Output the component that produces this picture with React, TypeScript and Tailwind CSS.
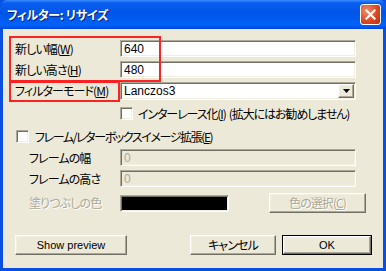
const sunken =
  'border border-t-[#aca899] border-l-[#aca899] border-r-white border-b-white shadow-[inset_1px_1px_#716f64,inset_-1px_-1px_#f1efe2]';
const raised =
  'border border-t-white border-l-white border-r-[#716f64] border-b-[#716f64] shadow-[inset_-1px_-1px_#aca899,inset_1px_1px_#f1efe2]';

const jp = "font-['MS_UI_Gothic','Noto_Sans_CJK_JP',sans-serif] [font-feature-settings:'palt'] tracking-[-0.9px]";
const latin = "font-['Liberation_Sans','Noto_Sans_CJK_JP',sans-serif] tracking-normal";

function CheckBox() {
  return <div className={`w-[13px] h-[13px] bg-white shrink-0 ${sunken}`} />;
}

function TextField({ value, disabled }: { value: string; disabled?: boolean }) {
  return (
    <div
      className={`w-[236px] h-[17px] flex items-center pl-[3px] text-[12px] leading-none ${latin} ${sunken} ${
        disabled ? 'bg-[#ece9d8] text-[#aca899]' : 'bg-white text-black'
      }`}
    >
      {value}
    </div>
  );
}

export default function App() {
  return (
    <div className={`w-[386px] h-[271px] flex flex-col bg-[#0a4fe0] ${jp} text-[12px] text-black relative`}>
      {/* title bar */}
      <div className="h-[29px] shrink-0 flex items-center pl-[7px] pr-[5px] rounded-t-[7px] bg-[linear-gradient(to_bottom,#3a8cff_0%,#0a5eef_10%,#0054e8_45%,#0062f8_85%,#0057ee_93%,#0041d4_100%)]">
        <span className="flex-1 text-white font-bold text-[12px] pt-[1px] tracking-[-0.3px] [text-shadow:1px_1px_#0a1f7d]">
          フィルター: リサイズ
        </span>
        <div className="w-[21px] h-[21px] rounded-[3px] border border-white bg-[radial-gradient(circle_at_30%_30%,#f08a6a,#d9441f_60%,#b8321a)] flex items-center justify-center">
          <svg width="11" height="11" viewBox="0 0 11 11">
            <path d="M1.5 1.5 L9.5 9.5 M9.5 1.5 L1.5 9.5" stroke="white" strokeWidth="2.2" strokeLinecap="square" />
          </svg>
        </div>
      </div>

      {/* client */}
      <div className="flex-1 flex flex-col bg-[#ece9d8] mx-[3px] mb-[3px] pt-[11px]">
        <div className="flex items-center h-[17px]">
          <div className="w-[117px] pl-[12px]">
            新しい幅(<u>W</u>)
          </div>
          <TextField value="640" />
        </div>
        <div className="flex items-center h-[17px] mt-[4px]">
          <div className="w-[117px] pl-[12px]">
            新しい高さ(<u>H</u>)
          </div>
          <TextField value="480" />
        </div>
        <div className="flex items-center h-[18px] mt-[4px]">
          <div className="w-[117px] pl-[12px]">
            フィルターモード(<u>M</u>)
          </div>
          <div className={`w-[236px] h-[18px] bg-white flex items-center pl-[3px] pr-[1px] ${sunken}`}>
            <span className={`flex-1 text-[12px] leading-none ${latin}`}>Lanczos3</span>
            <div className={`w-[16px] h-[14px] bg-[#ece9d8] flex items-center justify-center ${raised}`}>
              <svg width="7" height="4" viewBox="0 0 7 4">
                <path d="M0 0 H7 L3.5 4 Z" fill="black" />
              </svg>
            </div>
          </div>
        </div>

        <div className="flex items-center h-[13px] mt-[7px] pl-[117px] gap-[5px]">
          <CheckBox />
          <span className="whitespace-nowrap tracking-[-1.1px]">
            インターレース化(<u>I</u>)&nbsp; (拡大にはお勧めしません)
          </span>
        </div>

        <div className="flex items-center h-[13px] mt-[10px] pl-[13px] gap-[6px]">
          <CheckBox />
          <span className="whitespace-nowrap tracking-[-1.4px]">
            フレーム/レターボックスイメージ拡張(<u>E</u>)
          </span>
        </div>

        <div className="flex items-center h-[17px] mt-[6px]">
          <div className="w-[117px] pl-[26px]">フレームの幅</div>
          <TextField value="0" disabled />
        </div>
        <div className="flex items-center h-[17px] mt-[4px]">
          <div className="w-[117px] pl-[26px]">フレームの高さ</div>
          <TextField value="0" disabled />
        </div>

        <div className="flex items-center h-[20px] mt-[6px]">
          <div className="w-[117px] pl-[26px] text-[#aca899] [text-shadow:1px_1px_#fff]">塗りつぶしの色</div>
          <div className={`w-[109px] h-[17px] bg-black ${sunken}`} />
          <div
            className={`ml-[40px] w-[97px] h-[20px] flex items-center justify-center text-[#aca899] [text-shadow:1px_1px_#fff] ${raised}`}
          >
            色の選択(<u>C</u>)
          </div>
        </div>

        <div className="flex items-center h-[20px] mt-[22px] pl-[12px]">
          <div className={`w-[112px] h-[20px] flex items-center justify-center text-[11px] ${latin} ${raised}`}>
            Show preview
          </div>
          <div className={`ml-[63px] w-[86px] h-[20px] flex items-center justify-center ${raised}`}>
            キャンセル
          </div>
          <div className="ml-[6px] w-[90px] h-[20px] border border-black">
            <div className={`w-full h-full flex items-center justify-center text-[11px] ${latin} ${raised}`}>OK</div>
          </div>
        </div>
      </div>

      {/* red annotation boxes */}
      <div className="absolute left-[9px] top-[36px] w-[152px] h-[46px] border-2 border-[#f22]" />
      <div className="absolute left-[9px] top-[81px] w-[111px] h-[21px] border-2 border-[#f22]" />
    </div>
  );
}
